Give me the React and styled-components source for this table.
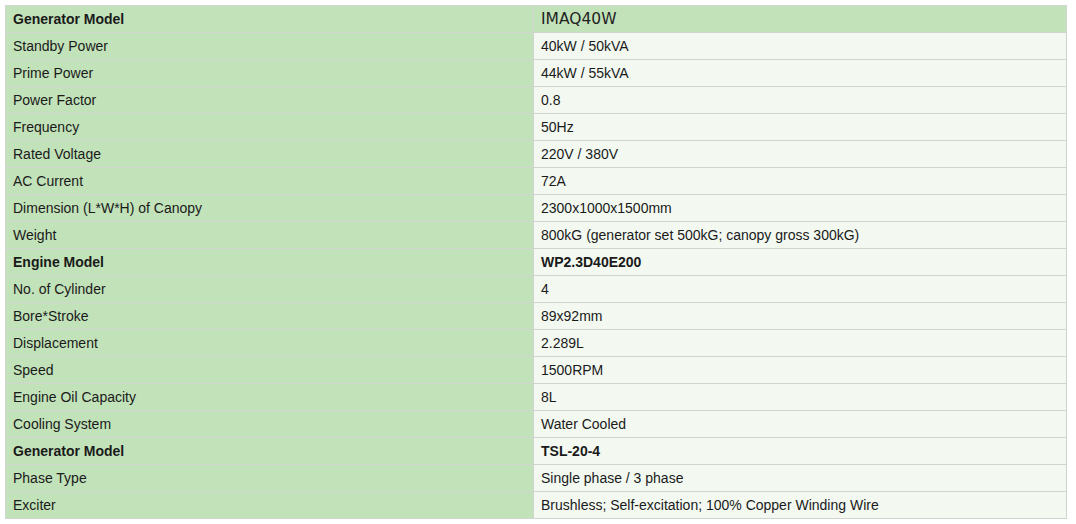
import styled, { createGlobalStyle } from 'styled-components';

const GlobalStyle = createGlobalStyle`
  body {
    margin: 0;
    background: #fff;
    font-family: "Liberation Sans", Arial, sans-serif;
  }
`;

const Wrap = styled.div`
  padding: 5px 9px 0 5px;
`;

const Table = styled.table`
  width: 100%;
  border-collapse: collapse;
  table-layout: fixed;
  border: 1px solid #d2d2d2;
`;

const Row = styled.tr`
  height: 27px;
`;

const Cell = styled.td`
  border: 1px solid #d2d4d0;
  padding: 0 6px 0 7px;
  height: 26px;
  font-size: 14px;
  color: #1a1a1a;
  background: ${(p) => (p.$label || p.$head ? '#c2e2b9' : '#f3f9f1')};
  font-weight: ${(p) => (p.$bold ? 700 : 400)};
  white-space: nowrap;
  vertical-align: middle;
`;

const Model = styled.span`
  font-family: "DejaVu Sans", Verdana, sans-serif;
  font-size: 15.5px;
  color: #222;
`;

const rows = [
  ['Generator Model', 'IMAQ40W', 'head'],
  ['Standby Power', '40kW / 50kVA'],
  ['Prime Power', '44kW / 55kVA'],
  ['Power Factor', '0.8'],
  ['Frequency', '50Hz'],
  ['Rated Voltage', '220V / 380V'],
  ['AC Current', '72A'],
  ['Dimension (L*W*H) of Canopy', '2300x1000x1500mm'],
  ['Weight', '800kG (generator set 500kG; canopy gross 300kG)'],
  ['Engine Model', 'WP2.3D40E200', 'bold'],
  ['No. of Cylinder', '4'],
  ['Bore*Stroke', '89x92mm'],
  ['Displacement', '2.289L'],
  ['Speed', '1500RPM'],
  ['Engine Oil Capacity', '8L'],
  ['Cooling System', 'Water Cooled'],
  ['Generator Model', 'TSL-20-4', 'bold'],
  ['Phase Type', 'Single phase / 3 phase'],
  ['Exciter', 'Brushless; Self-excitation; 100% Copper Winding Wire'],
];

export default function App() {
  return (
    <>
      <GlobalStyle />
      <Wrap>
        <Table>
          <colgroup>
            <col style={{ width: 528 }} />
            <col />
          </colgroup>
          <tbody>
            {rows.map(([label, value, kind], i) => (
              <Row key={i}>
                <Cell $label $bold={kind === 'head' || kind === 'bold'}>
                  {label}
                </Cell>
                <Cell $head={kind === 'head'} $bold={kind === 'bold'}>
                  {kind === 'head' ? <Model>{value}</Model> : value}
                </Cell>
              </Row>
            ))}
          </tbody>
        </Table>
      </Wrap>
    </>
  );
}
